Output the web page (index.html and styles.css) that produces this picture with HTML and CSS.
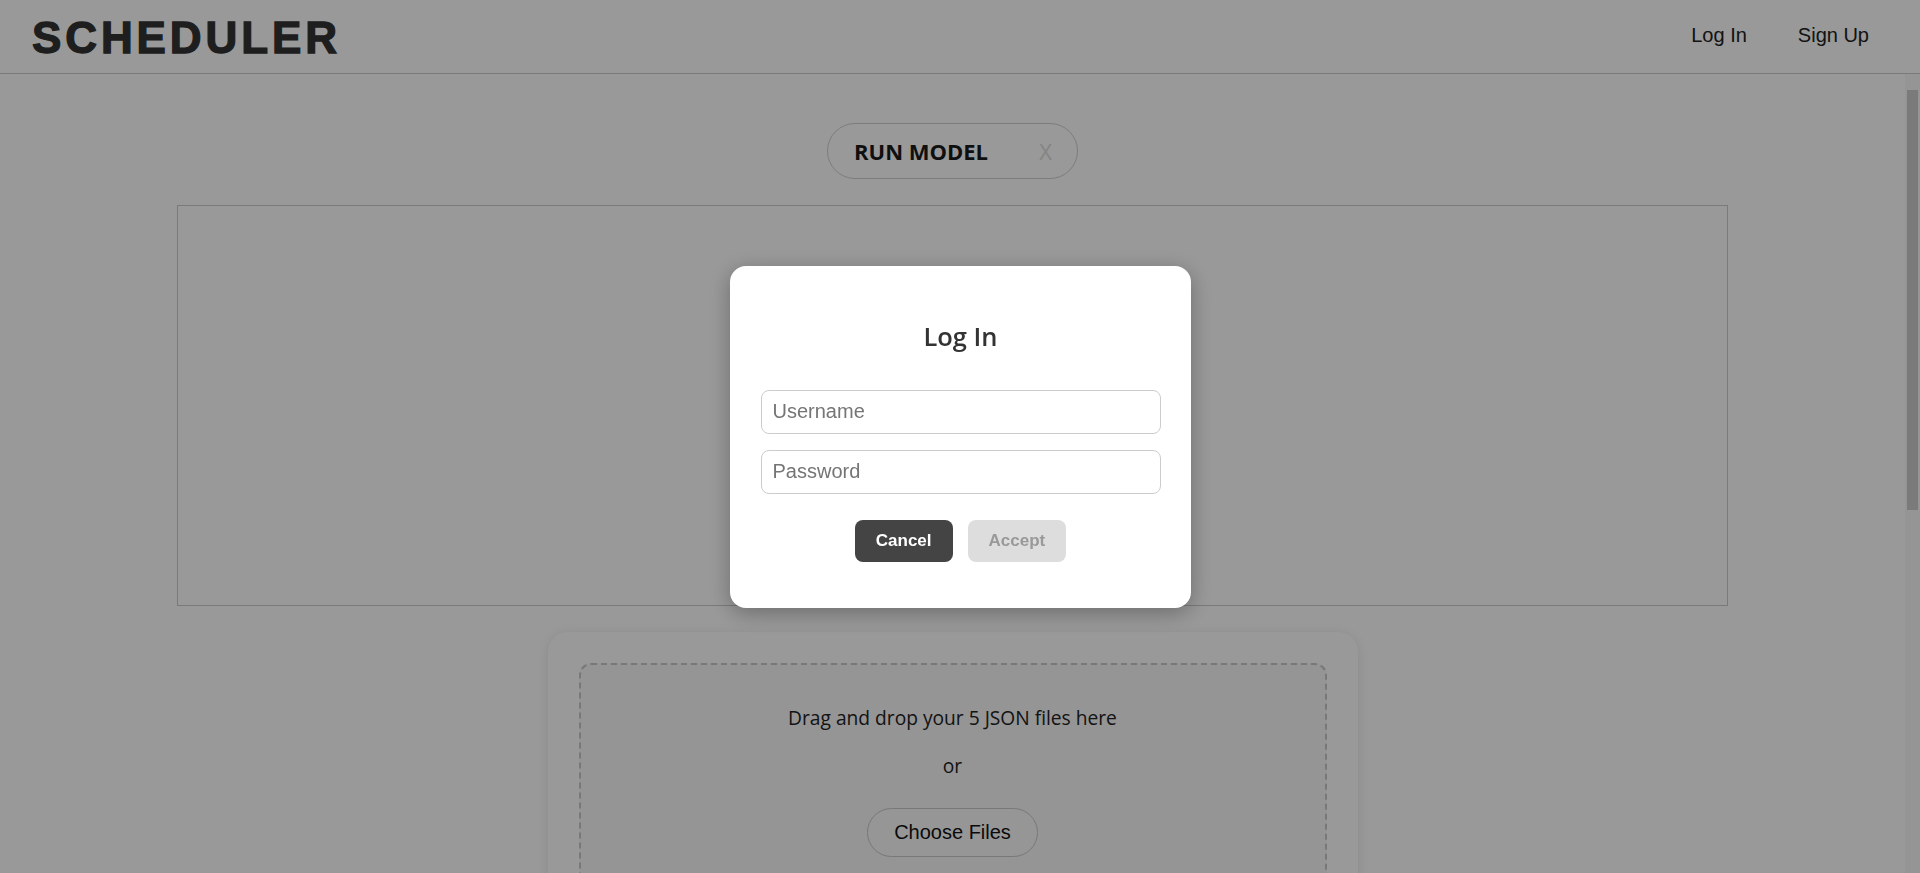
FILE: index.html
```html
<!DOCTYPE html>
<html lang="en">
<head>
<meta charset="utf-8">
<title>Scheduler</title>
<link rel="stylesheet" href="styles.css">
</head>
<body>
<header class="topbar">
  <div class="logo">SCHEDULER</div>
  <nav class="nav">
    <a class="nav-link" href="#">Log In</a>
    <a class="nav-link" href="#">Sign Up</a>
  </nav>
</header>
<div class="body-row">
  <main class="main">
    <div class="run-pill">
      <span class="run-label">RUN MODEL</span>
      <span class="run-close">X</span>
    </div>
    <section class="output-box"></section>
    <section class="upload-card">
      <div class="dropzone">
        <p class="drop-text">Drag and drop your 5 JSON files here</p>
        <p class="drop-or">or</p>
        <button class="choose-btn" type="button">Choose Files</button>
      </div>
    </section>
  </main>
  <div class="scrollbar" aria-hidden="true">
    <div class="scroll-thumb"></div>
  </div>
</div>
<div class="overlay">
  <div class="dialog">
    <h2 class="dialog-title">Log In</h2>
    <div class="fields">
      <input class="field" type="text" placeholder="Username">
      <input class="field" type="password" placeholder="Password">
    </div>
    <div class="actions">
      <button class="btn btn-cancel" type="button">Cancel</button>
      <button class="btn btn-accept" type="button">Accept</button>
    </div>
  </div>
</div>
</body>
</html>
```

FILE: styles.css
```css
* {
  box-sizing: border-box;
}

html, body {
  margin: 0;
  height: 100%;
  overflow: hidden;
}

body {
  font-family: "Open Sans", "Liberation Sans", sans-serif;
  background: #ffffff;
  color: #222;
  display: flex;
  flex-direction: column;
}

.topbar {
  height: 74px;
  flex: 0 0 74px;
  display: flex;
  align-items: center;
  justify-content: space-between;
  padding: 3px 51px 0 32px;
  border-bottom: 1px solid #cccccc;
  background: #ffffff;
}

.logo {
  font-family: "Liberation Sans", Arial, sans-serif;
  font-weight: 700;
  font-size: 44px;
  line-height: 44px;
  letter-spacing: 3.9px;
  color: #333;
  -webkit-text-stroke: 1.3px #333;
}

.nav {
  display: flex;
  gap: 51px;
  margin-top: -7px;
}

.nav-link {
  font-family: "Liberation Sans", Arial, sans-serif;
  font-size: 20px;
  line-height: 20px;
  color: #222;
  text-decoration: none;
}

.body-row {
  flex: 1 1 auto;
  min-height: 0;
  display: flex;
}

.main {
  flex: 1 1 auto;
  overflow: hidden;
  display: flex;
  flex-direction: column;
  align-items: center;
  padding: 49px 0 0;
}

.scrollbar {
  flex: 0 0 15px;
  background: #f8f8f8;
  padding: 16px 2px 0;
}

.scroll-thumb {
  height: 420px;
  background: #cbcbcb;
}

.run-pill {
  flex: 0 0 auto;
  height: 56px;
  width: 251px;
  display: flex;
  align-items: center;
  justify-content: space-between;
  padding: 0 25px 0 26px;
  border: 1px solid #cfcfcf;
  border-radius: 28px;
  background: #fff;
}

.run-label {
  font-weight: 700;
  font-size: 22px;
  color: #1a1a1a;
}

.run-close {
  font-size: 22px;
  color: #dddddd;
}

.output-box {
  flex: 0 0 auto;
  margin-top: 26px;
  width: 1551px;
  height: 401px;
  border: 1px solid #cccccc;
}

.upload-card {
  flex: 0 0 auto;
  margin-top: 26px;
  width: 810px;
  padding: 31px;
  background: #ffffff;
  border-radius: 20px;
  box-shadow: 0 2px 12px rgba(0, 0, 0, 0.1);
}

.dropzone {
  border: 2px dashed #c8c8c8;
  border-radius: 12px;
  background: #f8f8f8;
  padding: 41px 20px 40px;
  display: flex;
  flex-direction: column;
  align-items: center;
}

.drop-text,
.drop-or {
  margin: 0;
  font-size: 19.2px;
  line-height: 24px;
  color: #222;
}

.drop-or {
  margin-top: 24px;
}

.choose-btn {
  margin-top: 30px;
  height: 49px;
  padding: 0 26px;
  font-family: "Liberation Sans", Arial, sans-serif;
  font-size: 20px;
  color: #111;
  background: #fafafa;
  border: 1px solid #c8c8c8;
  border-radius: 25px;
}

.overlay {
  position: fixed;
  inset: 0;
  background: rgba(0, 0, 0, 0.4);
  display: flex;
  align-items: center;
  justify-content: center;
}

.dialog {
  width: 461px;
  padding: 54px 30px 46px 31px;
  background: #ffffff;
  border-radius: 16px;
  box-shadow: 0 5px 22px rgba(0, 0, 0, 0.3);
  display: flex;
  flex-direction: column;
  align-items: center;
}

.dialog-title {
  margin: 0 0 38px;
  font-size: 25.5px;
  line-height: 32px;
  font-weight: 600;
  color: #333;
}

.fields {
  width: 100%;
  display: flex;
  flex-direction: column;
  gap: 16px;
}

.field {
  width: 100%;
  height: 44px;
  padding: 0 11px;
  border: 1px solid #cccccc;
  border-radius: 8px;
  font-family: "Liberation Sans", Arial, sans-serif;
  font-size: 20px;
  color: #222;
  background: #fff;
  outline: none;
}

.field::placeholder {
  color: #757575;
}

.actions {
  margin-top: 26px;
  display: flex;
  gap: 15px;
}

.btn {
  height: 42px;
  padding: 0 21px;
  border: none;
  border-radius: 8px;
  font-family: "Liberation Sans", Arial, sans-serif;
  font-weight: 700;
  font-size: 17px;
}

.btn-cancel {
  background: #444444;
  color: #ffffff;
}

.btn-accept {
  background: #dddddd;
  color: #999999;
}
```
